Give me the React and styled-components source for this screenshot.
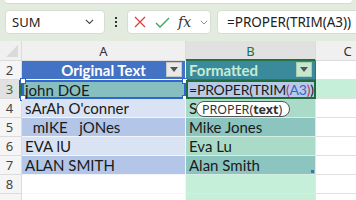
import styled, { createGlobalStyle } from 'styled-components';

const GlobalStyle = createGlobalStyle`
  body {
    margin: 0;
    background: #ffffff;
    overflow: hidden;
  }
`;

const Shell = styled.div`
  width: 356px;
  height: 200px;
  overflow: hidden;
  position: relative;
  font-family: 'Lato', 'Liberation Sans', sans-serif;
`;

const TopArea = styled.div`
  height: 41px;
  background: #e3ebdf;
  padding-left: 5px;
  box-sizing: border-box;
  display: flex;
  flex-direction: column;
`;

const RibbonEdge = styled.div`
  height: 3px;
  margin-right: 4px;
  background: #ffffff;
  border-radius: 0 0 6px 6px;
  box-shadow: 0 1px 0 #d3dccf;
`;

const FormulaBar = styled.div`
  display: flex;
  align-items: center;
  height: 24px;
  margin-top: 7px;
  font-family: 'Noto Sans', 'Open Sans', sans-serif;
`;

const Box = styled.div`
  height: 24px;
  box-sizing: border-box;
  background: #ffffff;
  border: 1px solid #d6ddd3;
  border-radius: 4px;
  display: flex;
  align-items: center;
`;

const NameBox = styled(Box)`
  width: 100px;
  padding: 0 10px 0 6px;
  justify-content: space-between;
  font-size: 13px;
  color: #222;
`;

const Dots = styled.div`
  width: 22px;
  display: flex;
  flex-direction: column;
  align-items: center;
  gap: 2px;

  span {
    width: 2px;
    height: 2px;
    background: #333;
  }
`;

const FuncBox = styled(Box)`
  width: 84px;
  padding-left: 6px;
  gap: 9px;
`;

const Fx = styled.span`
  font-family: 'DejaVu Serif', 'Liberation Serif', serif;
  font-style: italic;
  font-size: 14px;
  color: #333;
  margin-left: -1px;
`;

const FormulaBox = styled(Box)`
  flex: 1;
  margin-left: 6px;
  margin-right: -10px;
  padding-left: 9px;
  font-size: 13.5px;
  color: #222;
`;

const Sheet = styled.div`
  display: grid;
  grid-template-columns: 22px 164px 130px 64px;
  grid-template-rows: 20px repeat(8, 19px);
  position: relative;
`;

const Corner = styled.div`
  background: #f0f0f0;
  border-right: 1px solid #dcdcdc;
  border-bottom: 1px solid #dcdcdc;
  position: relative;

  svg {
    position: absolute;
    right: 3px;
    bottom: 3px;
  }
`;

const ColHeader = styled.div`
  background: ${(p) => (p.$active ? '#e1e1e1' : '#f0f0f0')};
  color: ${(p) => (p.$active ? '#217346' : '#333')};
  border-right: 1px solid #dcdcdc;
  border-bottom: ${(p) => (p.$active ? '2px solid #217346' : '1px solid #dcdcdc')};
  box-sizing: border-box;
  font-family: 'Noto Sans', 'Open Sans', sans-serif;
  font-size: 13px;
  display: flex;
  align-items: center;
  justify-content: center;
  padding-top: 1px;
`;

const RowHeader = styled.div`
  background: ${(p) => (p.$active ? '#e1e1e1' : '#f5f5f5')};
  color: ${(p) => (p.$active ? '#217346' : '#444')};
  border-right: ${(p) => (p.$active ? '3px solid #217346' : '1px solid #dcdcdc')};
  border-bottom: 1px solid #dcdcdc;
  box-sizing: border-box;
  font-family: 'Noto Sans', 'Open Sans', sans-serif;
  font-size: 13px;
  display: flex;
  align-items: center;
  justify-content: center;
  padding-right: ${(p) => (p.$active ? '0' : '2px')};
`;

const Cell = styled.div`
  position: relative;
  background: ${(p) => p.$bg || '#ffffff'};
  color: ${(p) => p.$color || '#1a1a1a'};
  font-weight: ${(p) => (p.$bold ? 700 : 400)};
  font-size: 15px;
  white-space: pre;
  box-sizing: border-box;
  border-right: 1px solid ${(p) => p.$line || '#e1e1e1'};
  border-bottom: 1px solid ${(p) => p.$line || '#e1e1e1'};
  padding: 0 3px;
  display: flex;
  align-items: center;
  justify-content: ${(p) => (p.$center ? 'center' : 'flex-start')};
  overflow: visible;
`;

const RefCell = styled(Cell)`
  border: 2px solid #3366cc;
  padding-left: 1px;
`;

const EditCell = styled(Cell)`
  border: 2px solid #1e6b3c;
  padding-left: 1px;
  font-size: 14px;
  letter-spacing: -0.2px;
  z-index: 2;
`;

const Handle = styled.span`
  position: absolute;
  width: 4px;
  height: 4px;
  background: #ffffff;
  border: 1px solid #3366cc;
  ${(p) => (p.$top ? 'top: -4px;' : 'bottom: -4px;')}
  ${(p) => (p.$left ? 'left: -4px;' : 'right: -4px;')}
`;

const FilterButton = styled.span`
  position: absolute;
  right: 3px;
  top: 1px;
  width: 16px;
  height: 15px;
  box-sizing: border-box;
  background: ${(p) => (p.$green ? '#c5e7cf' : '#e9e9e9')};
  border: 1px solid ${(p) => (p.$green ? '#a8cdb4' : '#c8c8c8')};
  display: flex;
  align-items: center;
  justify-content: center;

  &::after {
    content: '';
    border-left: 4px solid transparent;
    border-right: 4px solid transparent;
    border-top: 5px solid #555;
  }
`;

const FillMark = styled.span`
  position: absolute;
  right: 1px;
  bottom: 1px;
  width: 3px;
  height: 3px;
  background: #3f6fb6;
`;

const Tok = styled.span`
  color: ${(p) => p.$c};
`;

const Tooltip = styled.div`
  position: absolute;
  left: 196px;
  top: 60px;
  height: 16px;
  padding: 0 7px 0 5px;
  box-sizing: border-box;
  background: #ffffff;
  border: 1px solid #555;
  border-radius: 8px;
  font-family: 'Noto Sans', 'Open Sans', sans-serif;
  font-size: 12.5px;
  color: #333;
  display: flex;
  align-items: center;
  z-index: 5;

  b {
    font-weight: 700;
  }
`;

const Chevron = ({ size = 9, color = '#444' }) => (
  <svg width={size} height={size * 0.6} viewBox="0 0 10 6">
    <polyline points="1,1 5,5 9,1" fill="none" stroke={color} strokeWidth="1.2" />
  </svg>
);

const rows = [
  { n: 4, a: "sArAh O'conner", b: 'S', aBg: '#dae3f3', bBg: '#a9dbc8' },
  { n: 5, a: '  mIKE   jONes', b: 'Mike Jones', aBg: '#b4c6e7', bBg: '#8cc4c0' },
  { n: 6, a: 'EVA lU', b: 'Eva Lu', aBg: '#dae3f3', bBg: '#a9dbc8' },
  { n: 7, a: 'ALAN SMITH', b: 'Alan Smith', aBg: '#b4c6e7', bBg: '#8cc4c0', fill: true },
  { n: 8, a: '', b: '', aBg: '#ffffff', bBg: '#c6efda' },
  { n: '', a: '', b: '', aBg: '#ffffff', bBg: '#c6efda' },
];

const App = () => {
  return (
    <Shell>
      <GlobalStyle />
      <TopArea>
        <RibbonEdge />
        <FormulaBar>
          <NameBox>
            <span>SUM</span>
            <Chevron />
          </NameBox>
          <Dots>
            <span />
            <span />
            <span />
          </Dots>
          <FuncBox>
            <svg width="12" height="12" viewBox="0 0 12 12">
              <path d="M1 1 L11 11 M11 1 L1 11" stroke="#e0403a" strokeWidth="1.3" />
            </svg>
            <svg width="15" height="11" viewBox="0 0 15 11">
              <polyline points="1,6 5,10 14,1" fill="none" stroke="#3aa457" strokeWidth="1.3" />
            </svg>
            <Fx>fx</Fx>
            <Chevron size={8} color="#888" />
          </FuncBox>
          <FormulaBox>=PROPER(TRIM(A3))</FormulaBox>
        </FormulaBar>
      </TopArea>

      <Sheet>
        <Corner>
          <svg width="12" height="12" viewBox="0 0 12 12">
            <polygon points="12,0 12,12 0,12" fill="#dadada" />
          </svg>
        </Corner>
        <ColHeader>A</ColHeader>
        <ColHeader $active>B</ColHeader>
        <ColHeader>C</ColHeader>

        <RowHeader>2</RowHeader>
        <Cell $bg="#4472c4" $color="#ffffff" $bold $center $line="#ffffff">
          Original Text
          <FilterButton />
        </Cell>
        <Cell $bg="#3b8a9c" $color="#c6ecd3" $bold $line="#2b7a58">
          Formatted
          <FilterButton $green />
        </Cell>
        <Cell />

        <RowHeader $active>3</RowHeader>
        <RefCell $bg="#87bfc1">
          john DOE
          <Handle $top $left />
          <Handle $top />
          <Handle $left />
          <Handle />
        </RefCell>
        <EditCell $bg="#b8cae6">
          =PROPER(TRIM<Tok $c="#c0306a">(</Tok>
          <Tok $c="#3a64c8">A3</Tok>
          <Tok $c="#c0306a">)</Tok>)
        </EditCell>
        <Cell $bg="#c6efda" />

        {rows.map((r, i) => (
          <>
            <RowHeader key={`h${i}`}>{r.n}</RowHeader>
            <Cell key={`a${i}`} $bg={r.aBg} $line="#f2f5fb">
              {r.a}
            </Cell>
            <Cell key={`b${i}`} $bg={r.bBg} $line="#d4eee2">
              {r.b}
              {r.fill && <FillMark />}
            </Cell>
            <Cell key={`c${i}`} />
          </>
        ))}

        <Tooltip>
          PROPER(<b>text</b>)
        </Tooltip>
      </Sheet>
    </Shell>
  );
};

export default App;
